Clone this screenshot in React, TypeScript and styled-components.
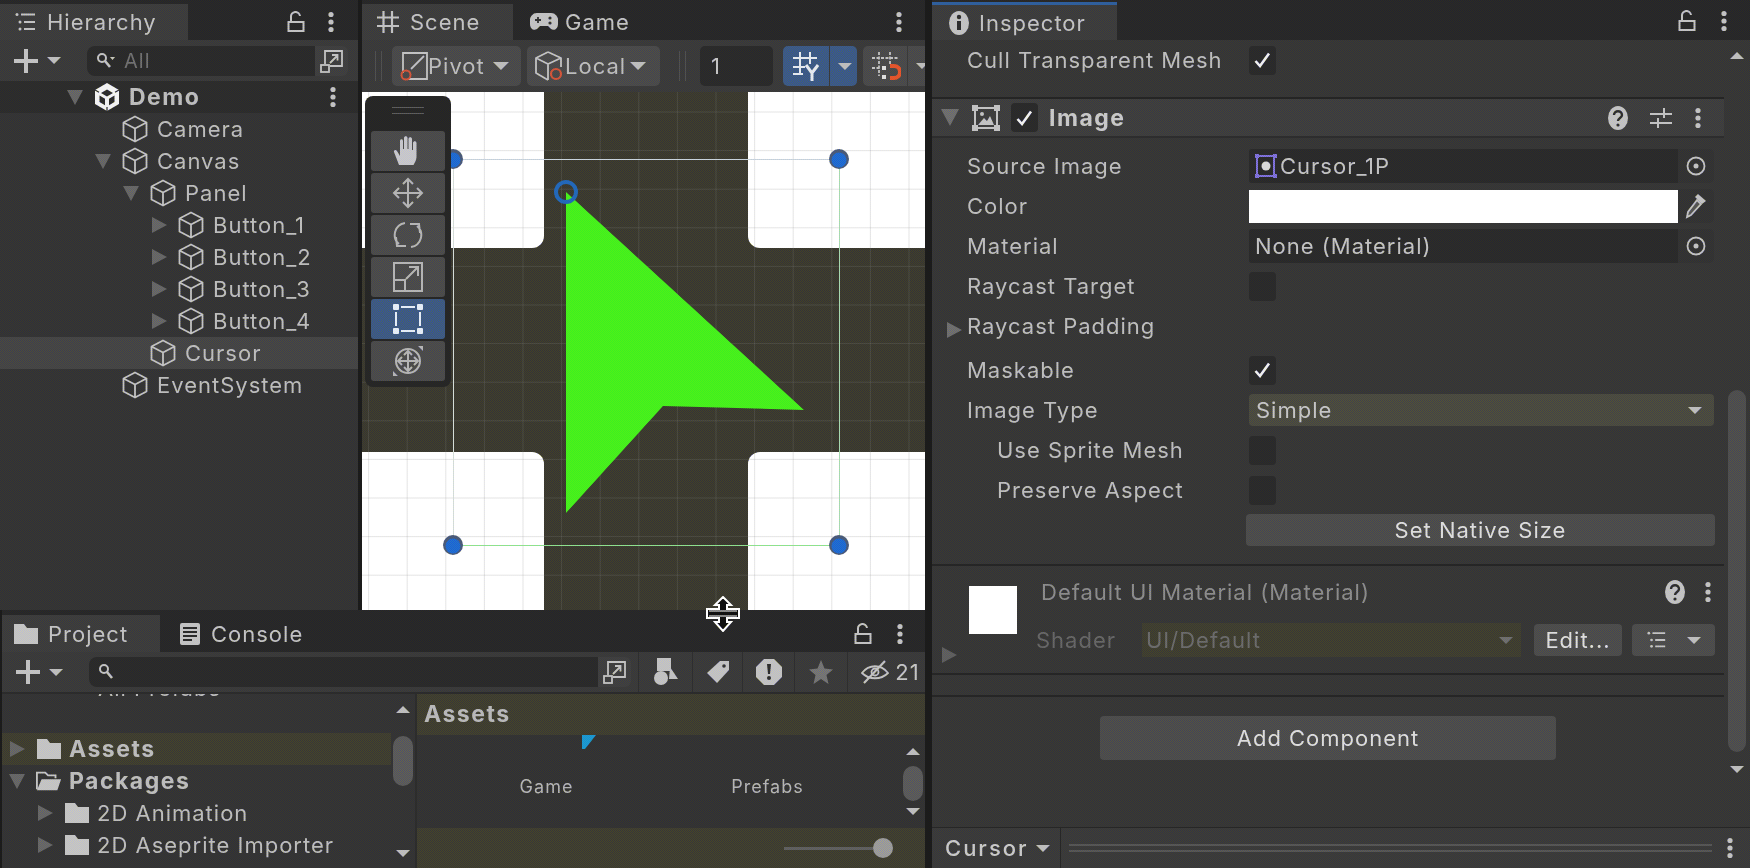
import React from "react";
import styled, { createGlobalStyle } from "styled-components";

const GlobalStyle = createGlobalStyle`
  html, body { margin: 0; padding: 0; background: #1b1b1b; overflow: hidden; }
  body { font-family: Inter, "Noto Sans", sans-serif; }
`;

const Screen = styled.div`
  position: relative;
  width: 1750px;
  height: 868px;
  display: flex;
  gap: 7px;
  background: #1b1b1b;
  color: #c4c4c4;
  font-size: 22px;
  letter-spacing: 1px;
  overflow: hidden;
  &::after {
    content: "";
    position: absolute;
    inset: 0;
    pointer-events: none;
    mix-blend-mode: overlay;
    background-image: repeating-conic-gradient(rgb(150, 150, 90) 0 25%, rgb(105, 105, 165) 0 50%);
    background-size: 2px 2px;
    z-index: 5;
  }
`;
const LeftColumn = styled.div`
  width: 925px;
  display: flex;
  flex-direction: column;
`;
const TopRow = styled.div`
  height: 610px;
  display: flex;
  gap: 4px;
`;
const Panel = styled.section<{ $w?: number }>`
  ${(p) => (p.$w ? `width: ${p.$w}px;` : "flex: 1; min-width: 0;")}
  display: flex;
  flex-direction: column;
  background: #363636;
  overflow: hidden;
`;
const TabBar = styled.div<{ $top?: number; $h?: number }>`
  height: ${(p) => (p.$h ?? 40) - (p.$top ?? 4)}px;
  padding-top: ${(p) => p.$top ?? 4}px;
  display: flex;
  align-items: stretch;
  background: #282828;
  flex: none;
`;
const Tab = styled.div<{ $w: number; $on?: boolean; $accent?: boolean; $gap?: number; $pl?: number }>`
  width: ${(p) => p.$w}px;
  box-sizing: border-box;
  padding-left: ${(p) => p.$pl ?? 14}px;
  display: flex;
  align-items: center;
  gap: ${(p) => p.$gap ?? 10}px;
  background: ${(p) => (p.$on ? "#3c3c3c" : "transparent")};
  border-top: ${(p) => (p.$accent ? "3px solid #2f5f9c" : "none")};
  color: #c2c2c2;
`;
const TabActions = styled.div<{ $pr: number; $gap: number }>`
  margin-left: auto;
  padding-right: ${(p) => p.$pr}px;
  display: flex;
  align-items: center;
  gap: ${(p) => p.$gap}px;
`;
const Toolbar = styled.div<{ $h: number }>`
  height: ${(p) => p.$h}px;
  flex: none;
  display: flex;
  align-items: center;
  background: #3a3a3a;
`;
const AddGroup = styled.div`
  width: 87px;
  box-sizing: border-box;
  padding-left: 14px;
  display: flex;
  align-items: center;
  gap: 9px;
  flex: none;
`;
const SearchBox = styled.div<{ $w: number }>`
  width: ${(p) => p.$w}px;
  height: 30px;
  box-sizing: border-box;
  padding-left: 9px;
  display: flex;
  align-items: center;
  gap: 8px;
  background: #2a2a2a;
  border-radius: 8px 0 0 8px;
  flex: none;
`;
const SearchHint = styled.span`
  color: #707070;
  font-size: 20px;
`;
const SearchButton = styled.div`
  width: 33px;
  height: 30px;
  display: flex;
  align-items: center;
  justify-content: center;
  background: #3f3f3f;
  border-radius: 0 6px 6px 0;
  flex: none;
`;
const Tri = styled.span<{ $dir?: "down" | "right" | "up"; $size?: number; $color?: string; $tall?: boolean }>`
  display: inline-block;
  flex: none;
  width: 0;
  height: 0;
  ${(p) => {
    const s = p.$size ?? 8;
    const c = p.$color ?? "#bdbdbd";
    const d = p.$tall ? Math.round(s * 1.9) : s;
    if (p.$dir === "right") return `border-top:${s}px solid transparent;border-bottom:${s}px solid transparent;border-left:${d}px solid ${c};`;
    if (p.$dir === "up") return `border-left:${s}px solid transparent;border-right:${s}px solid transparent;border-bottom:${d}px solid ${c};`;
    return `border-left:${s}px solid transparent;border-right:${s}px solid transparent;border-top:${d}px solid ${c};`;
  }}
`;
const Spacer = styled.span<{ $w: number }>`
  width: ${(p) => p.$w}px;
  flex: none;
`;
const TreeList = styled.div`
  flex: 1;
  background: #343434;
  overflow: hidden;
`;
const TreeRow = styled.div<{ $depth: number; $base: number; $bg?: string; $bold?: boolean }>`
  height: 32px;
  box-sizing: border-box;
  padding-left: ${(p) => p.$base + p.$depth * 28}px;
  padding-right: 21px;
  display: flex;
  align-items: center;
  background: ${(p) => p.$bg ?? "transparent"};
  font-weight: ${(p) => (p.$bold ? 700 : 400)};
  font-size: ${(p) => (p.$bold ? 23 : 22)}px;
  letter-spacing: ${(p) => (p.$bold ? 1.5 : 1)}px;
  color: #bcbcbc;
`;
const ArrowSlot = styled.span`
  width: 16px;
  margin-right: 11px;
  display: flex;
  justify-content: center;
  flex: none;
`;
const RowIcon = styled.span<{ $mr?: number }>`
  width: 26px;
  height: 28px;
  margin-right: ${(p) => p.$mr ?? 9}px;
  display: flex;
  align-items: center;
  justify-content: center;
  flex: none;
`;
const RowEnd = styled.span`
  margin-left: auto;
  display: flex;
`;

/* Scene */
const Grip = styled.span<{ $ml: number; $mr: number }>`
  width: 5px;
  height: 30px;
  margin: 0 ${(p) => p.$mr}px 0 ${(p) => p.$ml}px;
  border-left: 1px solid #505050;
  border-right: 1px solid #505050;
  flex: none;
`;
const ToolButton = styled.div<{ $w: number; $bg?: string; $ml?: number; $radius?: string }>`
  width: ${(p) => p.$w}px;
  height: 40px;
  margin-left: ${(p) => p.$ml ?? 0}px;
  box-sizing: border-box;
  padding-left: 8px;
  display: flex;
  align-items: center;
  background: ${(p) => p.$bg ?? "#4a4a4a"};
  border-radius: ${(p) => p.$radius ?? "5px"};
  flex: none;
`;
const ToolLabel = styled.span`
  width: 65px;
  color: #bcbcbc;
`;
const NumberField = styled.div`
  width: 73px;
  height: 40px;
  box-sizing: border-box;
  padding-left: 11px;
  display: flex;
  align-items: center;
  background: #2a2a2a;
  border-radius: 5px;
  flex: none;
`;
const Canvas = styled.div`
  position: relative;
  flex: 1;
  background: #3b3a2f;
  overflow: hidden;
`;
const WhiteCard = styled.div<{ $l: number; $t: number; $w: number; $h: number; $r: string }>`
  position: absolute;
  left: ${(p) => p.$l}px;
  top: ${(p) => p.$t}px;
  width: ${(p) => p.$w}px;
  height: ${(p) => p.$h}px;
  background: #ffffff;
  border-radius: ${(p) => p.$r};
`;
const Overlay = styled.svg`
  position: absolute;
  left: 0;
  top: 0;
`;
const ToolDock = styled.div`
  position: absolute;
  left: 3px;
  top: 4px;
  width: 86px;
  height: 291px;
  box-sizing: border-box;
  padding: 11px 6px 6px;
  display: flex;
  flex-direction: column;
  align-items: center;
  background: #262626;
  border-radius: 8px;
`;
const DockHandle = styled.div`
  width: 32px;
  height: 5px;
  margin-bottom: 17px;
  border-top: 1px solid #5c5c5c;
  border-bottom: 1px solid #5c5c5c;
  flex: none;
`;
const DockStack = styled.div`
  display: flex;
  flex-direction: column;
  gap: 2px;
`;
const DockButton = styled.div<{ $on?: boolean }>`
  width: 74px;
  height: 40px;
  display: flex;
  align-items: center;
  justify-content: center;
  background: ${(p) => (p.$on ? "#3e5a82" : "#4b4b4b")};
  border-radius: 3px;
`;
const ResizeCursor = styled.svg`
  position: absolute;
  left: 706px;
  top: 596px;
  z-index: 2;
`;

/* Project */
const ProjectPanel = styled.section`
  flex: 1;
  min-height: 0;
  margin-left: 2px;
  display: flex;
  flex-direction: column;
  overflow: hidden;
  background: #343434;
`;
const ToolCells = styled.div`
  margin-left: auto;
  display: flex;
`;
const ToolCell = styled.div<{ $w: number }>`
  width: ${(p) => p.$w}px;
  height: 40px;
  display: flex;
  align-items: center;
  justify-content: center;
  border-left: 1px solid #2e2e2e;
  box-sizing: border-box;
  flex: none;
`;
const EyeCell = styled(ToolCell)`
  gap: 6px;
  padding-left: 8px;
`;
const ProjectBody = styled.div`
  flex: 1;
  min-height: 0;
  display: flex;
  border-top: 2px solid #2b2b2b;
`;
const ProjectTree = styled.div`
  width: 413px;
  display: flex;
  flex: none;
  overflow: hidden;
  border-right: 2px solid #2c2c2c;
`;
const TreeScroll = styled.div`
  width: 389px;
  flex: none;
  overflow: hidden;
`;
const ClippedRow = styled(TreeRow)`
  margin-top: -22px;
  margin-bottom: 29px;
`;
const VScroll = styled.div<{ $pt: number }>`
  width: 24px;
  display: flex;
  flex-direction: column;
  align-items: center;
  padding-top: ${(p) => p.$pt}px;
  flex: none;
  box-sizing: border-box;
`;
const Thumb = styled.div<{ $h: number; $w?: number; $mt: number; $mb: number; $c?: string }>`
  width: ${(p) => p.$w ?? 20}px;
  height: ${(p) => p.$h}px;
  margin: ${(p) => p.$mt}px 0 ${(p) => p.$mb}px;
  background: ${(p) => p.$c ?? "#5a5a5a"};
  border-radius: 10px;
  flex: none;
`;
const AssetPane = styled.div`
  flex: 1;
  min-width: 0;
  display: flex;
  flex-direction: column;
  background: #333333;
`;
const AssetHeader = styled.div`
  height: 41px;
  box-sizing: border-box;
  padding: 0 0 2px 7px;
  display: flex;
  align-items: center;
  background: #3f3e30;
  font-weight: 700;
  font-size: 23px;
  letter-spacing: 1.5px;
  color: #b8b8b8;
  flex: none;
`;
const AssetGrid = styled.div`
  height: 93px;
  display: flex;
  flex: none;
`;
const AssetCells = styled.div`
  flex: 1;
  display: flex;
  flex-direction: column;
`;
const BlueBit = styled.svg`
  margin: 0 0 27px 165px;
  flex: none;
`;
const AssetLabels = styled.div`
  display: flex;
  font-size: 18px;
  color: #b4b4b4;
`;
const AssetLabel = styled.span`
  width: 221px;
  text-align: center;
  &:first-child { margin-left: 19px; }
`;
const SliderBar = styled.div`
  flex: 1;
  display: flex;
  align-items: center;
  justify-content: flex-end;
  padding-right: 32px;
  background: #3f3e30;
`;
const SliderTrack = styled.div`
  width: 89px;
  height: 3px;
  background: #5f5f5f;
`;
const SliderKnob = styled.div`
  width: 20px;
  height: 20px;
  border-radius: 50%;
  background: #9a9a9a;
  flex: none;
`;

/* Inspector */
const InspectorBody = styled.div`
  flex: 1;
  min-height: 0;
  display: flex;
  background: #363636;
`;
const InspectorContent = styled.div`
  width: 792px;
  flex: none;
  display: flex;
  flex-direction: column;
`;
const PropRow = styled.div<{ $indent?: number; $mt?: number; $mb?: number }>`
  height: 40px;
  margin-top: ${(p) => p.$mt ?? 0}px;
  margin-bottom: ${(p) => p.$mb ?? 0}px;
  display: flex;
  align-items: center;
  flex: none;
  padding-left: ${(p) => 35 + (p.$indent ?? 0)}px;
  position: relative;
`;
const PropLabel = styled.span`
  flex: 1;
  color: #bdbdbd;
  white-space: nowrap;
`;
const PropArrow = styled.span`
  position: absolute;
  left: 15px;
  top: 11px;
`;
const ValueBox = styled.div`
  width: 465px;
  margin-right: 10px;
  flex: none;
  display: flex;
  align-items: center;
`;
const Check = styled.div`
  width: 27px;
  height: 29px;
  display: flex;
  align-items: center;
  justify-content: center;
  background: #2a2a2a;
  border-radius: 4px;
  flex: none;
`;
const ObjectField = styled.div`
  flex: 1;
  height: 34px;
  box-sizing: border-box;
  padding-left: 6px;
  display: flex;
  align-items: center;
  gap: 3px;
  background: #2a2a2a;
  border-radius: 3px 0 0 3px;
  color: #c2c2c2;
`;
const ColorField = styled.div`
  flex: 1;
  height: 33px;
  background: #ffffff;
`;
const Picker = styled.div`
  width: 36px;
  height: 34px;
  display: flex;
  align-items: center;
  justify-content: center;
  background: #333333;
  border-radius: 0 5px 5px 0;
  flex: none;
`;
const SelectField = styled.div`
  flex: 1;
  height: 32px;
  box-sizing: border-box;
  padding: 0 12px 0 7px;
  display: flex;
  align-items: center;
  justify-content: space-between;
  background: #4a4a40;
  border-radius: 4px;
  color: #c4c4c4;
`;
const ActionButton = styled.div<{ $w: number; $h: number }>`
  width: ${(p) => p.$w}px;
  height: ${(p) => p.$h}px;
  display: flex;
  align-items: center;
  justify-content: center;
  flex: none;
  background: #4c4c4c;
  border-radius: 4px;
  color: #dcdcdc;
`;
const NativeRow = styled.div`
  display: flex;
  justify-content: flex-end;
  padding-right: 9px;
  height: 32px;
  margin: 4px 0 18px;
  flex: none;
`;
const ComponentHeader = styled.div`
  height: 41px;
  box-sizing: border-box;
  margin-top: 17px;
  padding: 0 22px 0 9px;
  display: flex;
  align-items: center;
  background: #3e3e3e;
  border-top: 2px solid #242424;
  border-bottom: 2px solid #2d2d2d;
  flex: none;
`;
const HeaderTitle = styled.span`
  margin-left: 11px;
  font-weight: 700;
  font-size: 23px;
  letter-spacing: 1.5px;
  color: #c8c8c8;
`;
const HeaderActions = styled.div<{ $gap: number }>`
  margin-left: auto;
  display: flex;
  align-items: center;
  gap: ${(p) => p.$gap}px;
`;
const MaterialBlock = styled.div`
  height: 111px;
  box-sizing: border-box;
  display: flex;
  flex: none;
  border-top: 2px solid #252525;
  border-bottom: 2px solid #252525;
`;
const MaterialArrow = styled.div`
  width: 37px;
  padding: 76px 0 0 10px;
  box-sizing: border-box;
  flex: none;
`;
const Swatch = styled.div`
  width: 48px;
  height: 48px;
  margin-top: 20px;
  background: #ffffff;
  flex: none;
`;
const MaterialColumn = styled.div`
  width: 688px;
  margin-left: 19px;
  display: flex;
  flex-direction: column;
  flex: none;
`;
const MaterialTitle = styled.div`
  height: 52px;
  padding: 0 12px 0 5px;
  display: flex;
  align-items: center;
  color: #8b8b8b;
`;
const MaterialControls = styled.div`
  display: flex;
  align-items: center;
  height: 36px;
  margin-top: 4px;
`;
const ShaderLabel = styled.span`
  width: 106px;
  color: #666666;
  flex: none;
`;
const ShaderSelect = styled.div`
  width: 379px;
  height: 34px;
  margin-right: 13px;
  box-sizing: border-box;
  padding: 0 8px 0 4px;
  display: flex;
  align-items: center;
  justify-content: space-between;
  color: #6b6b6b;
  background: #3f3e30;
  flex: none;
`;
const EmptySection = styled.div`
  height: 20px;
  border-bottom: 2px solid #252525;
  flex: none;
`;
const AddRow = styled.div`
  margin-top: 19px;
  display: flex;
  justify-content: center;
`;
const InspectorScroll = styled(VScroll)`
  margin-left: 1px;
`;
const Footer = styled.div`
  height: 41px;
  flex: none;
  display: flex;
  align-items: center;
  background: #3a3a3a;
  border-top: 1px solid #262626;
  box-sizing: border-box;
  padding-left: 13px;
`;
const FooterName = styled.div`
  width: 116px;
  height: 100%;
  box-sizing: border-box;
  display: flex;
  align-items: center;
  gap: 7px;
  border-right: 1px solid #262626;
  flex: none;
  font-weight: 500;
  letter-spacing: 2px;
  color: #c8c8c8;
`;
const FooterLines = styled.div`
  width: 643px;
  height: 4px;
  margin: 0 14px 0 8px;
  border-top: 2px solid #555555;
  border-bottom: 2px solid #555555;
  flex: none;
`;

/* Icons */
const C = "#c2c2c2";
const Dots = ({ c = C }: { c?: string }) => (
  <svg width="8" height="22" viewBox="0 0 8 22"><circle cx="4" cy="3.5" r="2.6" fill={c} /><circle cx="4" cy="11" r="2.6" fill={c} /><circle cx="4" cy="18.5" r="2.6" fill={c} /></svg>
);
const Lock = () => (
  <svg width="18" height="22" viewBox="0 0 18 22" fill="none" stroke={C} strokeWidth="2"><rect x="1.5" y="11" width="15" height="9" /><path d="M4 11V6a4.5 4.5 0 0 1 9-1" /></svg>
);
const Plus = () => (
  <svg width="24" height="24" viewBox="0 0 24 24"><path d="M10 0h4v10h10v4H14v10h-4V14H0v-4h10z" fill={C} /></svg>
);
const ListIcon = ({ s = 22 }: { s?: number }) => (
  <svg width={s} height={s} viewBox="0 0 22 22" fill="none" stroke={C} strokeWidth="2"><circle cx="2" cy="3.5" r="1.5" fill={C} stroke="none" /><circle cx="5" cy="11" r="1.5" fill={C} stroke="none" /><circle cx="5" cy="18" r="1.5" fill={C} stroke="none" /><path d="M6 3.5h14M9 11h11M9 18h11" /></svg>
);
const SearchIcon = ({ caret }: { caret?: boolean }) => (
  <svg width="20" height="18" viewBox="0 0 20 18" fill="none" stroke={C} strokeWidth="2"><circle cx="6" cy="6" r="4" /><path d="M9 9l5 6" strokeWidth="2.6" />{caret && <path d="M14 5h5l-2.5 3z" fill={C} stroke="none" />}</svg>
);
const Maximize = () => (
  <svg width="24" height="24" viewBox="0 0 24 24" fill="none" stroke={C} strokeWidth="1.8"><path d="M5 15V2h17v15H10" /><rect x="1" y="16" width="8" height="7" /><path d="M10 14l7-7M12 6h5.5v5.5" /></svg>
);
const Cube = ({ c = C }: { c?: string }) => (
  <svg width="26" height="28" viewBox="0 0 26 28" fill="none" stroke={c} strokeWidth="1.8" strokeLinejoin="round"><path d="M13 1.5L24.5 7.5v13L13 26.5 1.5 20.5v-13zM1.5 7.5L13 13.5 24.5 7.5M13 13.5v13" /></svg>
);
const UnityLogo = () => (
  <svg width="26" height="28" viewBox="0 0 26 28">
    <path d="M13 0L25 7v14l-12 7L1 21V7z" fill="#f2f2f2" />
    <path d="M13 6.5L19 10l-6 3.500L7 10zM5.500 12.500l5.500 3.200v6.500L5.500 19zM20.500 12.500L15 15.700v6.500l5.500-3.200z" fill="#2c2c2c" />
    <path d="M1 7l4 2.300M25 7l-4 2.300M13 28v-4" stroke="#2c2c2c" strokeWidth="1.2" />
  </svg>
);
const Hash = () => (
  <svg width="22" height="22" viewBox="0 0 22 22" stroke={C} strokeWidth="2.2" fill="none"><path d="M6.5 0v22M15 0v22M0 6.5h22M0 15h22" /></svg>
);
const Gamepad = () => (
  <svg width="28" height="18" viewBox="0 0 28 18"><path d="M7 0h14a7 7 0 0 1 7 8v3c0 5-4 7-7 5l-3-3H10l-3 3c-3 2-7 0-7-5V8a7 7 0 0 1 7-8z" fill={C} /><path d="M5 7h6M8 4v6" stroke="#333" strokeWidth="1.8" /><circle cx="20" cy="5" r="1.6" fill="#333" /><circle cx="20" cy="10" r="1.6" fill="#333" /></svg>
);
const PivotIcon = () => (
  <svg width="28" height="30" viewBox="0 0 28 30" fill="none"><path d="M3 22V2h24v26H8" stroke={C} strokeWidth="1.8" /><path d="M11 18L24 5" stroke={C} strokeWidth="1.8" /><circle cx="6" cy="24" r="4.5" stroke="#d2553a" strokeWidth="2" /></svg>
);
const LocalIcon = () => (
  <svg width="30" height="30" viewBox="0 0 30 30" fill="none"><path d="M13 1L26 7v9M13 1L1 7v15l12 7M1 7l12 6 13-6M13 13v16" stroke={C} strokeWidth="1.8" strokeLinejoin="round" /><circle cx="21" cy="23" r="5" stroke="#d2553a" strokeWidth="2.2" /></svg>
);
const GridYIcon = () => (
  <svg width="30" height="30" viewBox="0 0 30 30" fill="none" stroke="#e4e8ee" strokeWidth="2"><path d="M9 1v22M19 1v12M2 7h24M2 16h12M2 23h10" /><path d="M15 14l6 8 6-8M21 22v8" strokeWidth="3" /></svg>
);
const SnapIcon = () => (
  <svg width="30" height="30" viewBox="0 0 30 30" fill="none"><path d="M8 1v24M19 1v12M1 7h26M1 17h8" stroke={C} strokeWidth="1.8" strokeDasharray="3 1.5" /><rect x="11" y="15" width="4" height="4" fill="#ddd" /><rect x="11" y="24" width="4" height="4" fill="#ddd" /><path d="M19 15h4a5 5 0 0 1 0 12h-4" stroke="#e4552c" strokeWidth="4" /></svg>
);
const HandIcon = () => (
  <svg width="30" height="32" viewBox="0 0 30 32"><path d="M6 30L1 17c-.7-2 2-3 3-1l3 5V6c0-2.5 3-2.500 3 0v8h1V3c0-2.500 3.500-2.500 3.500 0v11h1V4c0-2.500 3.500-2.500 3.500 0v11h1V8c0-2.500 3.500-2.500 3.500 0v14c0 3-2 6-3 8z" fill="#c6c6cb" /></svg>
);
const S = { fill: "none", stroke: "#b4b4b4", strokeWidth: 2 };
const MoveIcon = () => (
  <svg width="32" height="32" viewBox="0 0 32 32" {...S}><path d="M16 2v28M2 16h28M11 7l5-5 5 5M11 25l5 5 5-5M7 11l-5 5 5 5M25 11l5 5-5 5" /></svg>
);
const RotateIcon = () => (
  <svg width="30" height="32" viewBox="0 0 30 32" {...S}><path d="M12 4A12 12 0 0 0 6 25M3 18l1 9h9M18 28a12 12 0 0 0 6-21M27 14l-1-9h-9" /></svg>
);
const ScaleIcon = () => (
  <svg width="30" height="30" viewBox="0 0 30 30" {...S}><path d="M1 18V1h28v28H12" /><rect x="1" y="18" width="11" height="11" /><path d="M13 17L25 5M16 5h9v9" /></svg>
);
const RectIcon = () => (
  <svg width="30" height="30" viewBox="0 0 30 30" fill="#e4ecf6"><rect x="0" y="0" width="6" height="6" rx="1" /><rect x="24" y="0" width="6" height="6" rx="1" /><rect x="0" y="24" width="6" height="6" rx="1" /><rect x="24" y="24" width="6" height="6" rx="1" /><path d="M8 2h14v2H8zM8 26h14v2H8zM2 8h2v14H2zM26 8h2v14h-2z" /></svg>
);
const TransformIcon = () => (
  <svg width="32" height="32" viewBox="0 0 32 32" {...S}><circle cx="16" cy="16" r="12" /><path d="M16 6v20M6 16h20M12 10l4-4 4 4M12 22l4 4 4-4M10 12l-4 4 4 4M22 12l4 4-4 4" /><path d="M26 1h5v5zM1 31v-5l5 5z" fill="#b4b4b4" stroke="none" /></svg>
);
const Folder = () => (
  <svg width="24" height="20" viewBox="0 0 24 20"><path d="M0 0h10l3 4h11v16H0z" fill="#c4c4c4" /></svg>
);
const OpenFolder = () => (
  <svg width="28" height="20" viewBox="0 0 28 20"><path d="M1 19V1h9l3 3h8v3" fill="none" stroke="#c4c4c4" strokeWidth="2" /><path d="M6 8h21l-4 12H1z" fill="#c4c4c4" /></svg>
);
const ConsoleIcon = () => (
  <svg width="20" height="22" viewBox="0 0 20 22"><path d="M2 0h16a2 2 0 0 1 2 2v18a2 2 0 0 1-2 2H2a2 2 0 0 1-2-2V2a2 2 0 0 1 2-2z" fill={C} /><path d="M3 5h14M3 9h14M3 13h14M3 17h9" stroke="#2a2a2a" strokeWidth="1.8" /></svg>
);
const ShapesIcon = () => (
  <svg width="24" height="28" viewBox="0 0 24 28" fill={C}><rect x="3" y="0" width="14" height="13" /><path d="M16 9l8 12h-9z" /><circle cx="7" cy="20" r="7" /></svg>
);
const TagIcon = () => (
  <svg width="22" height="22" viewBox="0 0 22 22"><path d="M13 0h9v9L10 22 0 12z" fill={C} /><circle cx="17" cy="5" r="1.8" fill="#333" /></svg>
);
const WarnIcon = () => (
  <svg width="26" height="26" viewBox="0 0 26 26"><path d="M8 0h10l8 8v10l-8 8H8l-8-8V8z" fill={C} /><path d="M11 5h4l-1 10h-2z" fill="#2e2e2e" /><circle cx="13" cy="19" r="2" fill="#2e2e2e" /></svg>
);
const StarIcon = () => (
  <svg width="24" height="24" viewBox="0 0 24 24"><path d="M12 0l3.5 8.5L24 9.5l-6.5 5.500 2 9L12 19l-7.500 5 2-9L0 9.500l8.500-1z" fill="#747474" /></svg>
);
const EyeOff = () => (
  <svg width="28" height="24" viewBox="0 0 28 24" fill="none" stroke={C} strokeWidth="1.8"><path d="M1 13c7-9 19-9 26 0-7 7-19 7-26 0z" /><circle cx="14" cy="12" r="3.5" /><path d="M3 23L24 1" strokeWidth="2.2" /></svg>
);
const InfoIcon = () => (
  <svg width="20" height="24" viewBox="0 0 20 24"><ellipse cx="10" cy="12" rx="10" ry="12" fill={C} /><rect x="8" y="10" width="4" height="9" fill="#2e2e2e" /><circle cx="10" cy="6" r="2.2" fill="#2e2e2e" /></svg>
);
const Tick = () => (
  <svg width="17" height="16" viewBox="0 0 17 16" fill="none" stroke="#f0f0f0" strokeWidth="2.6"><path d="M1.5 9l4.5 5L15 1.5" /></svg>
);
const ImageIcon = () => (
  <svg width="28" height="26" viewBox="0 0 28 26" fill="none" stroke={C} strokeWidth="2"><rect x="3" y="3" width="22" height="20" /><rect x="0.5" y="0.5" width="5" height="5" fill={C} strokeWidth="1" /><rect x="22.5" y="0.5" width="5" height="5" fill={C} strokeWidth="1" /><rect x="0.5" y="20.5" width="5" height="5" fill={C} strokeWidth="1" /><rect x="22.5" y="20.5" width="5" height="5" fill={C} strokeWidth="1" /><path d="M6 20l6-7 3 3 3-5 4 9z" fill={C} stroke="none" /><circle cx="10" cy="9" r="2" fill={C} stroke="none" /></svg>
);
const HelpIcon = () => (
  <svg width="20" height="24" viewBox="0 0 20 24"><ellipse cx="10" cy="12" rx="10" ry="12" fill={C} /><path d="M6 9c0-5 8-5 8 0 0 3-4 3-4 6" fill="none" stroke="#2e2e2e" strokeWidth="2.4" /><circle cx="10" cy="19" r="1.6" fill="#2e2e2e" /></svg>
);
const SlidersIcon = () => (
  <svg width="22" height="24" viewBox="0 0 22 24" fill="none" stroke={C} strokeWidth="2"><path d="M0 8h22M0 17h22M14 2v10M8 12v10" /></svg>
);
const SpriteIcon = () => (
  <svg width="22" height="24" viewBox="0 0 22 24" fill="none"><rect x="2" y="2" width="17" height="20" stroke="#7d6fd8" strokeWidth="2" /><rect x="0" y="0" width="4" height="4" fill="#7d6fd8" /><rect x="18" y="0" width="4" height="4" fill="#7d6fd8" /><rect x="0" y="20" width="4" height="4" fill="#7d6fd8" /><rect x="18" y="20" width="4" height="4" fill="#7d6fd8" /><circle cx="11" cy="12" r="4.5" fill="#d8d8d8" /></svg>
);
const TargetIcon = () => (
  <svg width="20" height="20" viewBox="0 0 20 20" fill="none"><circle cx="10" cy="10" r="8.5" stroke={C} strokeWidth="1.8" /><circle cx="10" cy="10" r="2.5" fill={C} /></svg>
);
const Eyedropper = () => (
  <svg width="22" height="26" viewBox="0 0 22 26" fill="none"><path d="M13 1l8 7-4 3-7-7z" fill={C} /><path d="M12 7l4 4L6 22l-4 2 1-5z" fill="#555" stroke={C} strokeWidth="1.8" /></svg>
);

const NAMES: [string, number, "down" | "right" | null][] = [
  ["Camera", 1, null],
  ["Canvas", 1, "down"],
  ["Panel", 2, "down"],
  ["Button_1", 3, "right"],
  ["Button_2", 3, "right"],
  ["Button_3", 3, "right"],
  ["Button_4", 3, "right"],
  ["Cursor", 2, null],
  ["EventSystem", 1, null],
];

const GRID_V = Array.from({ length: 15 }, (_, i) => 6.6 + i * 38.6);
const GRID_H = Array.from({ length: 14 }, (_, i) => 20 + i * 38.6);
const HANDLES = [[91, 67], [477, 67], [91, 453], [477, 453]];

const Arrow = ({ dir }: { dir: "down" | "right" | null }) => (
  <ArrowSlot>{dir && <Tri $dir={dir} $size={8} $tall $color="#666666" />}</ArrowSlot>
);

export default function App() {
  return (
    <Screen>
      <GlobalStyle />
      <LeftColumn>
        <TopRow>
          <Panel $w={358}>
            <TabBar>
              <Tab $w={188} $on $pl={15} $gap={10}><ListIcon />Hierarchy</Tab>
              <TabActions $pr={23} $gap={22}><Lock /><Dots /></TabActions>
            </TabBar>
            <Toolbar $h={41}>
              <AddGroup><Plus /><Tri $size={7} /></AddGroup>
              <SearchBox $w={228}><SearchIcon caret /><SearchHint>All</SearchHint></SearchBox>
              <SearchButton><Maximize /></SearchButton>
            </Toolbar>
            <TreeList>
              <TreeRow $depth={0} $base={67} $bg="#2c2c2c" $bold>
                <Arrow dir="down" />
                <RowIcon><UnityLogo /></RowIcon>
                Demo
                <RowEnd><Dots /></RowEnd>
              </TreeRow>
              {NAMES.map(([name, depth, dir]) => (
                <TreeRow key={name} $depth={depth} $base={67} $bg={name === "Cursor" ? "#454545" : undefined}>
                  <Arrow dir={dir} />
                  <RowIcon><Cube /></RowIcon>
                  {name}
                </TreeRow>
              ))}
            </TreeList>
          </Panel>
          <Panel>
            <TabBar $top={4}>
              <Tab $w={151} $on $pl={15} $gap={11}><Hash />Scene</Tab>
              <Tab $w={150} $pl={17} $gap={7}><Gamepad />Game</Tab>
              <TabActions $pr={22} $gap={0}><Dots /></TabActions>
            </TabBar>
            <Toolbar $h={52}>
              <Grip $ml={13} $mr={10} />
              <ToolButton $w={129}><PivotIcon /><ToolLabel>Pivot</ToolLabel><Tri $size={8} /></ToolButton>
              <ToolButton $w={133} $ml={6}><LocalIcon /><ToolLabel>Local</ToolLabel><Tri $size={8} /></ToolButton>
              <Grip $ml={19} $mr={14} />
              <NumberField>1</NumberField>
              <ToolButton $w={46} $ml={10} $bg="#3c5a85" $radius="5px 0 0 5px"><GridYIcon /></ToolButton>
              <ToolButton $w={27} $ml={1} $bg="#3c5a85" $radius="0 5px 5px 0"><Tri $size={7} /></ToolButton>
              <ToolButton $w={44} $ml={6} $radius="5px 0 0 5px"><SnapIcon /></ToolButton>
              <ToolButton $w={18} $ml={1} $radius="0"><Tri $size={6} /></ToolButton>
            </Toolbar>
            <Canvas>
              <WhiteCard $l={0} $t={0} $w={182} $h={156} $r="0 0 12px 0" />
              <WhiteCard $l={386} $t={0} $w={177} $h={156} $r="0 0 0 12px" />
              <WhiteCard $l={0} $t={360} $w={182} $h={158} $r="0 12px 0 0" />
              <WhiteCard $l={386} $t={360} $w={177} $h={158} $r="12px 0 0 0" />
              <Overlay width="563" height="518" viewBox="0 0 563 518">
                {GRID_V.map((x) => <line key={x} x1={x} x2={x} y1="0" y2="518" stroke="#8a8a8a" strokeOpacity="0.22" />)}
                {GRID_H.map((y) => <line key={y} x1="0" x2="563" y1={y} y2={y} stroke="#8a8a8a" strokeOpacity="0.22" />)}
                <polygon points="204,100 442,318 301,314 204,421" fill="#46f01c" />
                <line x1="91" y1="67.5" x2="477" y2="67.5" stroke="#c8d2dc" />
                <line x1="91.5" y1="67" x2="91.5" y2="453" stroke="#d4dcd8" />
                <line x1="477.5" y1="67" x2="477.5" y2="453" stroke="#a8d8b0" />
                <line x1="91" y1="453.5" x2="477" y2="453.5" stroke="#8fe08f" />
                {HANDLES.map(([x, y]) => (
                  <g key={`${x}-${y}`}>
                    <circle cx={x} cy={y} r="10" fill="#4a5a78" />
                    <circle cx={x} cy={y + 1} r="7.5" fill="#1f6ad0" />
                  </g>
                ))}
                <circle cx="204" cy="100" r="10" fill="none" stroke="#2368b8" strokeWidth="4" />
              </Overlay>
              <ToolDock>
                <DockHandle />
                <DockStack>
                  <DockButton><HandIcon /></DockButton>
                  <DockButton><MoveIcon /></DockButton>
                  <DockButton><RotateIcon /></DockButton>
                  <DockButton><ScaleIcon /></DockButton>
                  <DockButton $on><RectIcon /></DockButton>
                  <DockButton><TransformIcon /></DockButton>
                </DockStack>
              </ToolDock>
            </Canvas>
          </Panel>
        </TopRow>
        <ProjectPanel>
          <TabBar $top={5} $h={42}>
            <Tab $w={158} $on $pl={12} $gap={10}><Folder />Project</Tab>
            <Tab $w={160} $pl={20} $gap={11}><ConsoleIcon />Console</Tab>
            <TabActions $pr={21} $gap={24}><Lock /><Dots /></TabActions>
          </TabBar>
          <Toolbar $h={40}>
            <AddGroup><Plus /><Tri $size={7} /></AddGroup>
            <SearchBox $w={509}><SearchIcon /></SearchBox>
            <SearchButton><Maximize /></SearchButton>
            <ToolCells>
              <ToolCell $w={54}><ShapesIcon /></ToolCell>
              <ToolCell $w={50}><TagIcon /></ToolCell>
              <ToolCell $w={52}><WarnIcon /></ToolCell>
              <ToolCell $w={53}><StarIcon /></ToolCell>
              <EyeCell $w={78}><EyeOff />21</EyeCell>
            </ToolCells>
          </Toolbar>
          <ProjectBody>
            <ProjectTree>
              <TreeScroll>
                <ClippedRow $depth={0} $base={96}>All Prefabs</ClippedRow>
                <TreeRow $depth={0} $base={7} $bg="#3f3e30" $bold>
                  <ArrowSlot><Tri $dir="right" $size={8} $tall $color="#666666" /></ArrowSlot>
                  <RowIcon $mr={7}><Folder /></RowIcon>
                  Assets
                </TreeRow>
                <TreeRow $depth={0} $base={7} $bold>
                  <ArrowSlot><Tri $size={8} $tall $color="#666666" /></ArrowSlot>
                  <RowIcon $mr={7}><OpenFolder /></RowIcon>
                  Packages
                </TreeRow>
                <TreeRow $depth={1} $base={7}>
                  <ArrowSlot><Tri $dir="right" $size={8} $tall $color="#666666" /></ArrowSlot>
                  <RowIcon $mr={7}><Folder /></RowIcon>
                  2D Animation
                </TreeRow>
                <TreeRow $depth={1} $base={7}>
                  <ArrowSlot><Tri $dir="right" $size={8} $tall $color="#666666" /></ArrowSlot>
                  <RowIcon $mr={7}><Folder /></RowIcon>
                  2D Aseprite Importer
                </TreeRow>
              </TreeScroll>
              <VScroll $pt={12}>
                <Tri $dir="up" $size={7} />
                <Thumb $h={50} $mt={23} $mb={64} />
                <Tri $size={7} />
              </VScroll>
            </ProjectTree>
            <AssetPane>
              <AssetHeader>Assets</AssetHeader>
              <AssetGrid>
                <AssetCells>
                  <BlueBit width="14" height="14" viewBox="0 0 14 14"><path d="M0 0h14L3 14H0z" fill="#1c97d0" /></BlueBit>
                  <AssetLabels><AssetLabel>Game</AssetLabel><AssetLabel>Prefabs</AssetLabel></AssetLabels>
                </AssetCells>
                <VScroll $pt={13}>
                  <Tri $dir="up" $size={7} />
                  <Thumb $h={35} $mt={11} $mb={7} />
                  <Tri $size={7} />
                </VScroll>
              </AssetGrid>
              <SliderBar><SliderTrack /><SliderKnob /></SliderBar>
            </AssetPane>
          </ProjectBody>
        </ProjectPanel>
      </LeftColumn>
      <Panel>
        <TabBar $top={2}>
          <Tab $w={185} $on $accent $pl={17} $gap={10}><InfoIcon />Inspector</Tab>
          <TabActions $pr={22} $gap={24}><Lock /><Dots /></TabActions>
        </TabBar>
        <InspectorBody>
          <InspectorContent>
            <PropRow><PropLabel>Cull Transparent Mesh</PropLabel><ValueBox><Check><Tick /></Check></ValueBox></PropRow>
            <ComponentHeader>
              <Tri $size={9} $tall $color="#6e6e6e" />
              <Spacer $w={13} />
              <ImageIcon />
              <Spacer $w={11} />
              <Check><Tick /></Check>
              <HeaderTitle>Image</HeaderTitle>
              <HeaderActions $gap={22}><HelpIcon /><SlidersIcon /><Dots /></HeaderActions>
            </ComponentHeader>
            <PropRow $mt={8}><PropLabel>Source Image</PropLabel><ValueBox><ObjectField><SpriteIcon />Cursor_1P</ObjectField><Picker><TargetIcon /></Picker></ValueBox></PropRow>
            <PropRow><PropLabel>Color</PropLabel><ValueBox><ColorField /><Picker><Eyedropper /></Picker></ValueBox></PropRow>
            <PropRow><PropLabel>Material</PropLabel><ValueBox><ObjectField>None (Material)</ObjectField><Picker><TargetIcon /></Picker></ValueBox></PropRow>
            <PropRow><PropLabel>Raycast Target</PropLabel><ValueBox><Check /></ValueBox></PropRow>
            <PropRow $mb={4}><PropArrow><Tri $dir="right" $size={8} $tall $color="#6e6e6e" /></PropArrow><PropLabel>Raycast Padding</PropLabel></PropRow>
            <PropRow><PropLabel>Maskable</PropLabel><ValueBox><Check><Tick /></Check></ValueBox></PropRow>
            <PropRow><PropLabel>Image Type</PropLabel><ValueBox><SelectField>Simple<Tri $size={7} /></SelectField></ValueBox></PropRow>
            <PropRow $indent={30}><PropLabel>Use Sprite Mesh</PropLabel><ValueBox><Check /></ValueBox></PropRow>
            <PropRow $indent={30}><PropLabel>Preserve Aspect</PropLabel><ValueBox><Check /></ValueBox></PropRow>
            <NativeRow><ActionButton $w={469} $h={32}>Set Native Size</ActionButton></NativeRow>
            <MaterialBlock>
              <MaterialArrow><Tri $dir="right" $size={8} $tall $color="#5e5e5e" /></MaterialArrow>
              <Swatch />
              <MaterialColumn>
                <MaterialTitle>
                  Default UI Material (Material)
                  <HeaderActions $gap={19}><HelpIcon /><Dots /></HeaderActions>
                </MaterialTitle>
                <MaterialControls>
                  <ShaderLabel>Shader</ShaderLabel>
                  <ShaderSelect>UI/Default<Tri $size={7} $color="#6e6e6e" /></ShaderSelect>
                  <ActionButton $w={88} $h={32}>Edit...</ActionButton>
                  <Spacer $w={10} />
                  <ActionButton $w={83} $h={32}><ListIcon s={20} /><Spacer $w={20} /><Tri $size={7} /></ActionButton>
                </MaterialControls>
              </MaterialColumn>
            </MaterialBlock>
            <EmptySection />
            <AddRow><ActionButton $w={456} $h={44}>Add Component</ActionButton></AddRow>
          </InspectorContent>
          <InspectorScroll $pt={12}>
            <Tri $dir="up" $size={7} />
            <Thumb $h={362} $w={18} $mt={331} $mb={14} $c="#4e4e4e" />
            <Tri $size={7} />
          </InspectorScroll>
        </InspectorBody>
        <Footer>
          <FooterName>Cursor<Tri $size={7} /></FooterName>
          <FooterLines />
          <Dots />
        </Footer>
      </Panel>
      <ResizeCursor width="36" height="36" viewBox="0 0 36 36">
        <path d="M17 1l8 8h-4v4h12v9H21v4h4l-8 9-8-9h4v-4H1v-9h12V9H9z" fill="#111" stroke="#fff" strokeWidth="2" />
        <path d="M3 15h28M3 20h28" stroke="#fff" strokeWidth="1" />
      </ResizeCursor>
    </Screen>
  );
}
